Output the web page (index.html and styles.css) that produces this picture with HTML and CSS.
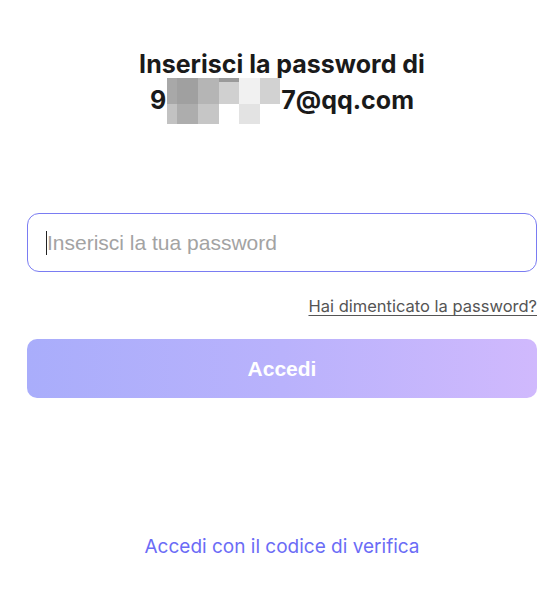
FILE: index.html
```html
<!DOCTYPE html>
<html lang="it">
<head>
    <meta charset="UTF-8">
    <meta name="viewport" content="width=device-width, initial-scale=1.0">
    <title>Accedi</title>
    <link rel="stylesheet" href="styles.css">
</head>
<body>
    <div class="container">
        <h1 class="title">
            Inserisci la password di<br>
            9<span class="mask"><span class="mask-grid">
                <i class="c1"></i><i class="c2"></i><i class="c3"></i><i class="c4 strip"></i><i class="c5"></i><i class="c6"></i>
                <i class="d1"></i><i class="d2"></i><i class="d3"></i><i class="d4"></i><i class="d5"></i><i class="d6"></i>
            </span></span>7@qq.com
        </h1>

        <div class="field">
            <span class="caret"></span>
            <input type="password" placeholder="Inserisci la tua password">
        </div>

        <div class="forgot-row">
            <a href="#" class="forgot">Hai dimenticato la password?</a>
        </div>

        <button class="login-button">Accedi</button>

        <a href="#" class="code-link">Accedi con il codice di verifica</a>
    </div>
</body>
</html>
```

FILE: styles.css
```css
body {
    margin: 0;
    padding: 0;
    background-color: white;
    font-family: Inter, "Noto Sans", sans-serif;
}

.container {
    display: flex;
    flex-direction: column;
    padding: 46px 23px 0 27px;
}

.title {
    margin: 0;
    text-align: center;
    font-size: 25px;
    font-weight: 700;
    line-height: 36px;
    height: 72px;
    color: #1a1a1a;
}

.mask {
    display: inline-block;
    overflow: hidden;
    width: 113px;
    height: 46px;
    margin: -8px 1px -15px 1px;
    vertical-align: baseline;
}

.mask-grid {
    display: grid;
    grid-template-columns: 10px 21px 21px 20px 21px 20px;
    grid-template-rows: 26px 20px;
}

.mask i {
    display: block;
}

.c1 { background: #a8a8a8; }
.c2 { background: #a0a0a0; }
.c3 { background: #b5b5b5; }
.c4 { background: #d0d0d0; }
.c5 { background: #f1f1f1; }
.c6 { background: #d2d2d2; }
.d1 { background: #c2c2c2; }
.d2 { background: #adadad; }
.d3 { background: #c6c6c6; }
.d4 { background: #ffffff; }
.d5 { background: #e3e3e3; }
.d6 { background: #ffffff; }

.strip {
    border-top: 4px solid #9a9a9a;
}

.field {
    position: relative;
    margin-top: 95px;
    height: 59px;
    border: 1px solid #7a7cf2;
    border-radius: 12px;
    box-sizing: border-box;
    display: flex;
    align-items: center;
}

.field input {
    border: none;
    outline: none;
    width: 100%;
    padding: 0 0 0 19px;
    font-family: "Liberation Sans", Arial, sans-serif;
    font-size: 21px;
    background: transparent;
}

.field input::placeholder {
    color: #a3a3a3;
}

.caret {
    position: absolute;
    left: 18px;
    top: 17px;
    width: 1px;
    height: 24px;
    background: #222;
}

.forgot-row {
    display: flex;
    justify-content: flex-end;
    margin-top: 24px;
}

.forgot {
    color: #555;
    font-size: 16.5px;
    text-decoration: underline;
    text-underline-offset: 3px;
}

.login-button {
    margin-top: 23px;
    height: 59px;
    border: none;
    border-radius: 10px;
    background: linear-gradient(90deg, #a9adfb 0%, #b9b2fc 50%, #d0b9fd 100%);
    color: white;
    font-family: "Liberation Sans", Arial, sans-serif;
    font-size: 21px;
    font-weight: bold;
    cursor: pointer;
}

.code-link {
    margin-top: 137px;
    align-self: center;
    color: #6b6cf6;
    font-size: 19px;
    text-decoration: none;
}
```
